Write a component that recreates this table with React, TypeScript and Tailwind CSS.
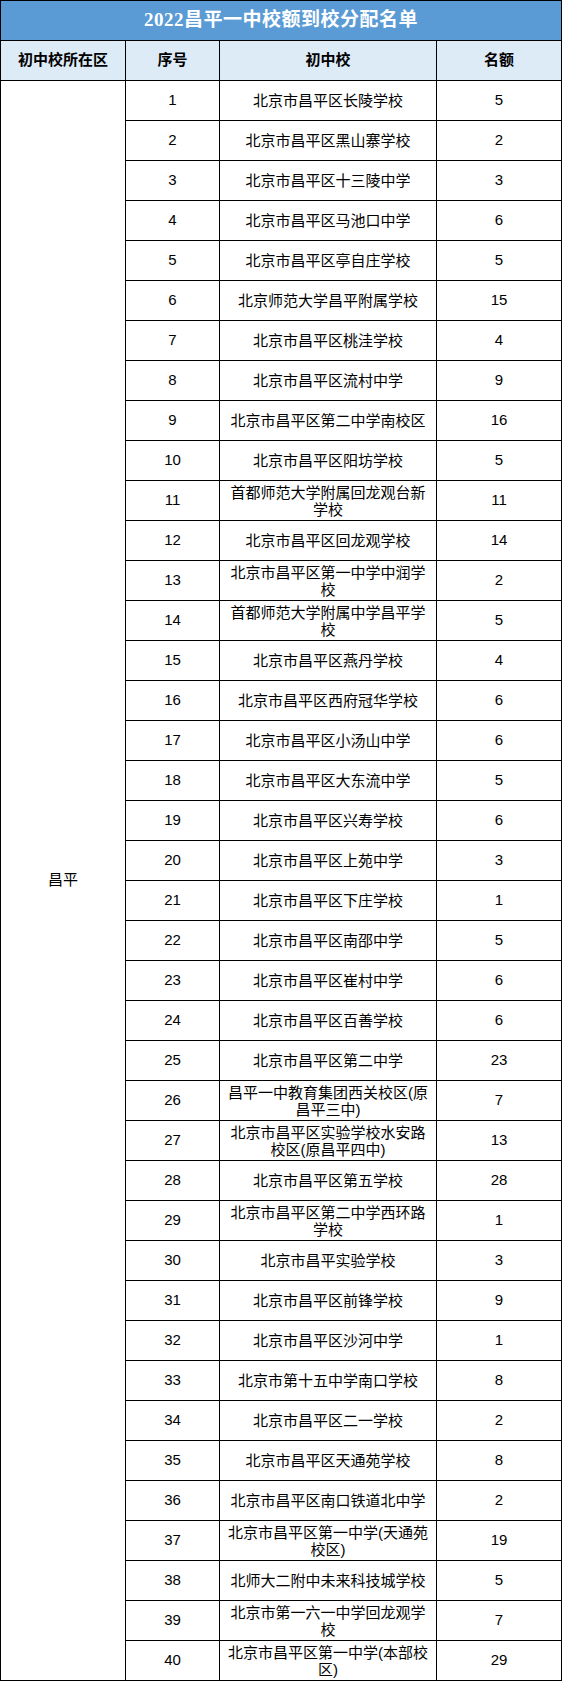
const schools: [number, string, number][] = [
  [1, "北京市昌平区长陵学校", 5],
  [2, "北京市昌平区黑山寨学校", 2],
  [3, "北京市昌平区十三陵中学", 3],
  [4, "北京市昌平区马池口中学", 6],
  [5, "北京市昌平区亭自庄学校", 5],
  [6, "北京师范大学昌平附属学校", 15],
  [7, "北京市昌平区桃洼学校", 4],
  [8, "北京市昌平区流村中学", 9],
  [9, "北京市昌平区第二中学南校区", 16],
  [10, "北京市昌平区阳坊学校", 5],
  [11, "首都师范大学附属回龙观台新学校", 11],
  [12, "北京市昌平区回龙观学校", 14],
  [13, "北京市昌平区第一中学中润学校", 2],
  [14, "首都师范大学附属中学昌平学校", 5],
  [15, "北京市昌平区燕丹学校", 4],
  [16, "北京市昌平区西府冠华学校", 6],
  [17, "北京市昌平区小汤山中学", 6],
  [18, "北京市昌平区大东流中学", 5],
  [19, "北京市昌平区兴寿学校", 6],
  [20, "北京市昌平区上苑中学", 3],
  [21, "北京市昌平区下庄学校", 1],
  [22, "北京市昌平区南邵中学", 5],
  [23, "北京市昌平区崔村中学", 6],
  [24, "北京市昌平区百善学校", 6],
  [25, "北京市昌平区第二中学", 23],
  [26, "昌平一中教育集团西关校区(原昌平三中)", 7],
  [27, "北京市昌平区实验学校水安路校区(原昌平四中)", 13],
  [28, "北京市昌平区第五学校", 28],
  [29, "北京市昌平区第二中学西环路学校", 1],
  [30, "北京市昌平实验学校", 3],
  [31, "北京市昌平区前锋学校", 9],
  [32, "北京市昌平区沙河中学", 1],
  [33, "北京市第十五中学南口学校", 8],
  [34, "北京市昌平区二一学校", 2],
  [35, "北京市昌平区天通苑学校", 8],
  [36, "北京市昌平区南口铁道北中学", 2],
  [37, "北京市昌平区第一中学(天通苑校区)", 19],
  [38, "北师大二附中未来科技城学校", 5],
  [39, "北京市第一六一中学回龙观学校", 7],
  [40, "北京市昌平区第一中学(本部校区)", 29],
];

export default function App() {
  return (
    <div
      className="w-[562px] bg-white text-black"
      style={{ fontFamily: "'Liberation Sans', 'Noto Sans CJK SC', sans-serif" }}
    >
      <div className="box-border border-x border-black">
        {/* title */}
        <div className="box-border h-[40px] border-t border-black bg-[#5b9bd5] flex items-center justify-center">
          <span
            className="text-[19px] font-bold text-white tracking-[0.5px]"
            style={{ fontFamily: "'Liberation Serif', 'Noto Sans CJK SC', serif" }}
          >
            2022昌平一中校额到校分配名单
          </span>
        </div>

        {/* header */}
        <div className="box-border h-[41px] border-y border-black bg-[#ddebf7] flex text-[15px] font-bold">
          <div className="w-[125px] shrink-0 border-r border-black flex items-center justify-center">
            初中校所在区
          </div>
          <div className="w-[94px] shrink-0 border-r border-black flex items-center justify-center">
            序号
          </div>
          <div className="w-[217px] shrink-0 border-r border-black flex items-center justify-center">
            初中校
          </div>
          <div className="flex-1 flex items-center justify-center">名额</div>
        </div>

        {/* body */}
        <div className="flex text-[15px]">
          <div className="box-border w-[125px] shrink-0 border-r border-b border-black flex items-center justify-center">
            昌平
          </div>
          <div className="flex-1">
            {schools.map(([no, name, quota]) => (
              <div key={no} className="box-border h-[40px] border-b border-black flex">
                <div className="w-[94px] shrink-0 border-r border-black flex items-center justify-center">
                  {no}
                </div>
                <div className="w-[217px] shrink-0 border-r border-black flex items-center justify-center px-[5px] text-center leading-[17px]">
                  {name}
                </div>
                <div className="flex-1 flex items-center justify-center">{quota}</div>
              </div>
            ))}
          </div>
        </div>
      </div>
    </div>
  );
}
